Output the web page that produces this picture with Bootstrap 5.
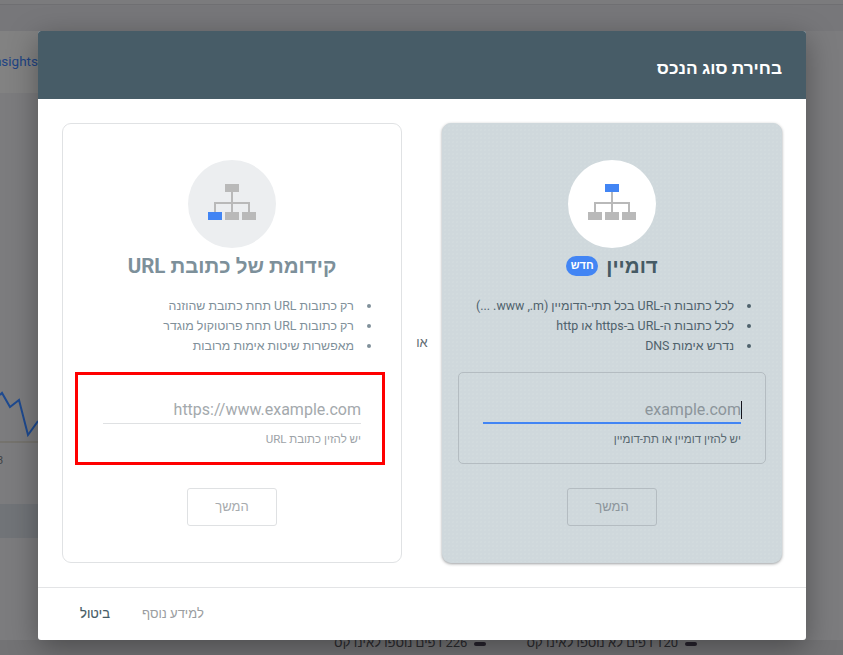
<!doctype html>
<html lang="he">
<head>
<meta charset="utf-8">
<title>בחירת סוג הנכס</title>
<link rel="stylesheet" href="https://cdn.jsdelivr.net/npm/bootstrap@5.3.0/dist/css/bootstrap.min.css">
<style>
html,body{height:100%;margin:0}
body{background:#7c7c7e;overflow:hidden;font-family:Roboto,"Liberation Sans",sans-serif;position:relative}
.bg-top{height:31px;background:#77777a;box-shadow:inset 0 4px 0 #7b7b7d,inset 0 5px 0 #6f6f72}
.bg-insights{height:62px;background:#828282;padding-top:21px;width:38px;overflow:hidden;color:#1e4484;font-size:13.5px;line-height:18px;white-space:nowrap;direction:rtl}
.bg-chart{display:block;margin-top:283px}
.bg-num{height:18px;margin-top:6px;width:38px;font-size:11px;line-height:18px;color:#3f4246;margin-left:-3px}
.bg-band{height:34px;width:38px;background:#717478;margin-top:34px}
.bg-foot{height:15px;position:absolute;left:0;right:0;bottom:0;background:#737375;direction:rtl;color:#2a2a2e;font-size:13px;line-height:15px}
.bg-foot-inner{gap:40px;padding-right:146px;margin-top:-5px;white-space:nowrap}
.bg-dash{display:inline-block;width:12px;height:4px;border-radius:2px;background:#26222c;margin-left:7px;vertical-align:middle}
.sheet{position:absolute;left:38px;top:31px;width:768px;height:609px;border:0;border-radius:3px;direction:rtl;box-shadow:0 8px 30px rgba(0,0,0,.35);overflow:hidden;background:#fff}
.sheet-head{height:68px;background:#475c67;border:0;border-radius:0;padding:5px 24px 0;color:#fff}
.sheet-title{font-size:17.3px;font-weight:700;line-height:24px;margin:0}
.sheet-body{height:488px;padding:24px;gap:0}
.prop{width:340px;height:440px;border:1px solid #e0e2e4;border-radius:9px;background:#fff;padding-top:36px}
.prop-on{background-color:#cfd8dc;border-color:#cfd8dc;box-shadow:0 1px 3px rgba(60,64,67,.5);background-image:radial-gradient(rgba(255,255,255,.14) .6px,transparent .8px);background-size:4px 4px}
.or-col{width:40px;font-size:13px;color:#5f6b72}
.disc{width:88px;height:88px;border-radius:50%;background:#eceef0}
.disc svg{margin-bottom:4px}
.prop-on .disc{background:#fff}
.prop-name{font-size:20.5px;font-weight:700;line-height:28px;margin:4px 0 0;height:28px;color:#7d909a}
.prop-on .prop-name{color:#455a64}
.tag-new{font-size:11px;font-weight:700;background:#4285f4;color:#fff;border-radius:10px;width:32px;height:20px;line-height:20px;padding:0;margin-top:4px}
.perks{list-style:none;margin:16px 0 0;padding:0 30px 0 0;font-size:12.4px;line-height:20px;color:#80909a;height:66px}
.perks li{display:flex;align-items:center;gap:13px}
.perks li::before{content:"";flex:none;width:4px;height:4px;border-radius:50%;background:currentColor}
.prop-on .perks{color:#4f626c}
.entry{height:92px;margin:10px 15px 0;border:1px solid #b4bcc1;border-radius:5px;padding:23px 24px 0}
.entry-flag{margin:10px 16px -1px 12px;height:93px;border:3px solid #f00;border-radius:0;padding:21px 21px 0 25px}
.entry-val{height:27px;line-height:28px;font-size:16px;color:#a4a9ad;text-align:right;direction:ltr;border-bottom:1px solid #dfe1e3;box-sizing:content-box}
.prop-on .entry-val{color:#8c959b;border-bottom:2px solid #4285f4;height:26px}
.caret-bar{display:inline-block;width:1px;height:18px;background:#14141c;vertical-align:-4px;margin-right:-1px}
.entry-hint{font-size:11.5px;line-height:14px;margin-top:8px;color:#9da3a8}
.prop-on .entry-hint{color:#586870}
.go-btn,.go-btn:disabled{width:90px;height:38px;margin-top:24px;font-size:13px;line-height:36px;padding:0;border:1px solid #dfe1e3;border-radius:3px;color:#a7abae;background:transparent;opacity:1}
.prop-on .go-btn,.prop-on .go-btn:disabled{border-color:#b4bcc1;color:#8c959b}
.sheet-foot{height:53px;border-top:1px solid #e3e4e6;padding:0 42px;gap:32px;font-size:13px;border-radius:0}
.foot-more{color:#9a9da0}
.foot-cancel{color:#455a64;-webkit-text-stroke:.15px #455a64}
</style>
</head>
<body>
<div class="bg-top"></div>
<div class="bg-insights">insights</div>
<svg class="bg-chart" width="38" height="70" viewBox="0 0 38 70" aria-hidden="true">
<polyline points="0,19 2,17 10,31 19,24 28,59 38,45" fill="none" stroke="#1e4a90" stroke-width="2"/>
<line x1="0" y1="66" x2="38" y2="66" stroke="#6f6a5e" stroke-width="1"/>
</svg>
<div class="bg-num">3</div>
<div class="bg-band"></div>
<div class="bg-foot">
<div class="bg-foot-inner d-flex">
<span><span class="bg-dash"></span>120 דפים לא נוספו לאינדקס</span>
<span><span class="bg-dash"></span>226 דפים נוספו לאינדקס</span>
</div>
</div>

<div class="modal-content sheet">
<div class="modal-header sheet-head"><h5 class="sheet-title">בחירת סוג הנכס</h5></div>
<div class="modal-body sheet-body d-flex">
<section class="prop prop-on d-flex flex-column">
<div class="disc align-self-center d-flex align-items-center justify-content-center">
<svg width="48" height="36" viewBox="0 0 48 36" aria-hidden="true"><path d="M23 8h2v10h17v10h-2v-8H25v8h-2v-8H8v8H6V18h17z" fill="#b9b9b9"/><rect x="17" width="14" height="8" fill="#4285f4"/><rect y="28" width="14" height="8" fill="#b9b9b9"/><rect x="17" y="28" width="14" height="8" fill="#b9b9b9"/><rect x="34" y="28" width="14" height="8" fill="#b9b9b9"/></svg>
</div>
<div class="d-flex justify-content-center align-items-center gap-2">
<h5 class="prop-name">דומיין</h5><span class="badge tag-new">חדש</span>
</div>
<ul class="perks">
<li><span>לכל כתובות ה-URL בכל תתי-הדומיין (m&rlm;.,&rlm; www&rlm;. ...)</span></li>
<li><span>לכל כתובות ה-URL ב-https או http</span></li>
<li><span>נדרש אימות DNS</span></li>
</ul>
<div class="entry">
<div class="entry-val">example.com<span class="caret-bar"></span></div>
<div class="entry-hint">יש להזין דומיין או תת-דומיין</div>
</div>
<button class="btn go-btn align-self-center" type="button" disabled>המשך</button>
</section>
<div class="or-col d-flex align-items-center justify-content-center">או</div>
<section class="prop d-flex flex-column">
<div class="disc align-self-center d-flex align-items-center justify-content-center">
<svg width="48" height="36" viewBox="0 0 48 36" aria-hidden="true"><path d="M23 8h2v10h17v10h-2v-8H25v8h-2v-8H8v8H6V18h17z" fill="#b9b9b9"/><rect x="17" width="14" height="8" fill="#b9b9b9"/><rect y="28" width="14" height="8" fill="#4285f4"/><rect x="17" y="28" width="14" height="8" fill="#b9b9b9"/><rect x="34" y="28" width="14" height="8" fill="#b9b9b9"/></svg>
</div>
<div class="d-flex justify-content-center align-items-center">
<h5 class="prop-name">קידומת של כתובת URL</h5>
</div>
<ul class="perks">
<li><span>רק כתובות URL תחת כתובת שהוזנה</span></li>
<li><span>רק כתובות URL תחת פרוטוקול מוגדר</span></li>
<li><span>מאפשרות שיטות אימות מרובות</span></li>
</ul>
<div class="entry-flag">
<div class="entry-val">https://www.example.com</div>
<div class="entry-hint">יש להזין כתובת URL</div>
</div>
<button class="btn go-btn align-self-center" type="button" disabled>המשך</button>
</section>
</div>
<div class="modal-footer sheet-foot d-flex justify-content-end">
<span class="foot-more">למידע נוסף</span>
<span class="foot-cancel">ביטול</span>
</div>
</div>
<script src="https://cdn.jsdelivr.net/npm/bootstrap@5.3.0/dist/js/bootstrap.bundle.min.js"></script>
</body>
</html>
